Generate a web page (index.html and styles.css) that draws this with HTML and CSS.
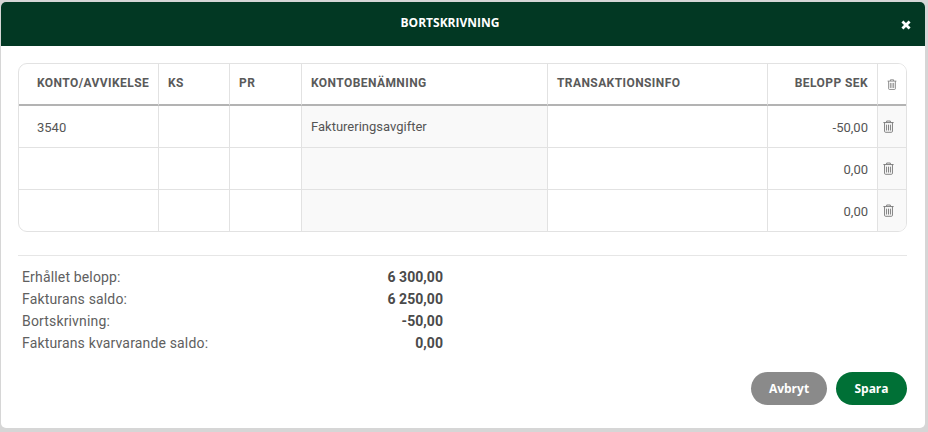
FILE: index.html
```html
<!DOCTYPE html>
<html lang="sv">
<head>
<meta charset="utf-8">
<title>Bortskrivning</title>
<link rel="stylesheet" href="styles.css">
</head>
<body>
<svg class="sprite" width="0" height="0" aria-hidden="true">
  <symbol id="trash" viewBox="0 0 12 14">
    <path d="M4 2.5V1h4v1.5M.4 2.7h11.2M1.7 2.7v9.6c0 .6.4 1 1 1h6.6c.6 0 1-.4 1-1V2.7M3.9 5v6.4M6 5v6.4M8.1 5v6.4" fill="none" stroke="currentColor" stroke-width="1"/>
  </symbol>
</svg>
<main class="modal">
  <header class="modal-head">
    <h1 class="modal-title">BORTSKRIVNING</h1>
    <button class="close" type="button" aria-label="Stäng">
      <svg width="10" height="10" viewBox="0 0 10 10"><path d="M2.4 2.4l5.2 5.2M7.6 2.4L2.4 7.6" stroke="#fff" stroke-width="2.8" stroke-linecap="square" fill="none"/></svg>
    </button>
  </header>
  <section class="modal-body">
    <div class="table-wrap">
      <table class="grid">
        <colgroup>
          <col class="c-konto"><col class="c-ks"><col class="c-pr"><col class="c-namn"><col class="c-info"><col class="c-belopp"><col class="c-del">
        </colgroup>
        <thead>
          <tr>
            <th class="first">KONTO/AVVIKELSE</th>
            <th>KS</th>
            <th>PR</th>
            <th>KONTOBENÄMNING</th>
            <th>TRANSAKTIONSINFO</th>
            <th class="num">BELOPP SEK</th>
            <th class="del head-del"><svg class="trash-small"><use href="#trash"/></svg></th>
          </tr>
        </thead>
        <tbody>
          <tr>
            <td class="first">3540</td><td></td><td></td>
            <td class="ro"><span class="ro-text">Faktureringsavgifter</span></td><td></td>
            <td class="num">-50,00</td>
            <td class="del"><svg class="trash"><use href="#trash"/></svg></td>
          </tr>
          <tr>
            <td class="first"></td><td></td><td></td><td class="ro"></td><td></td>
            <td class="num">0,00</td>
            <td class="del"><svg class="trash"><use href="#trash"/></svg></td>
          </tr>
          <tr>
            <td class="first"></td><td></td><td></td><td class="ro"></td><td></td>
            <td class="num">0,00</td>
            <td class="del"><svg class="trash"><use href="#trash"/></svg></td>
          </tr>
        </tbody>
      </table>
    </div>
    <hr class="rule">
    <dl class="summary">
      <div class="sum-row"><dt>Erhållet belopp:</dt><dd>6 300,00</dd></div>
      <div class="sum-row"><dt>Fakturans saldo:</dt><dd>6 250,00</dd></div>
      <div class="sum-row"><dt>Bortskrivning:</dt><dd>-50,00</dd></div>
      <div class="sum-row"><dt>Fakturans kvarvarande saldo:</dt><dd>0,00</dd></div>
    </dl>
    <div class="actions">
      <button class="btn btn-cancel" type="button">Avbryt</button>
      <button class="btn btn-save" type="button">Spara</button>
    </div>
  </section>
</main>
</body>
</html>
```
FILE: styles.css
```css
* { box-sizing: border-box; }
html, body { margin: 0; height: 100%; }
body {
  background: #d6d6d6;
  font-family: Roboto, "Liberation Sans", sans-serif;
  color: #4a4a4a;
  overflow: hidden;
  padding: 2px 3px 4px 1px;
}
.sprite { position: absolute; }
.modal {
  height: 426px;
  background: #fff;
  border-radius: 5px;
  overflow: hidden;
  display: flex;
  flex-direction: column;
}
.modal-head {
  height: 44px;
  flex: none;
  background: #023823;
  display: flex;
  align-items: flex-start;
  justify-content: center;
  padding-right: 26px;
  position: relative;
}
.modal-title {
  margin: 13px 0 0;
  font-family: "Open Sans", sans-serif;
  font-size: 12px;
  line-height: 15px;
  font-weight: 700;
  color: #fff;
}
.close {
  position: absolute;
  right: 14px;
  top: 18px;
  width: 10px;
  height: 10px;
  padding: 0;
  border: 0;
  background: none;
  display: flex;
}
.modal-body {
  flex: 1;
  padding: 17px 18px 0 17px;
  display: flex;
  flex-direction: column;
}
.table-wrap {
  width: 889px;
  height: 169px;
  border: 1px solid #e2e2e2;
  border-radius: 9px;
  overflow: hidden;
}
.grid {
  width: 887px;
  border-collapse: separate;
  border-spacing: 0;
  table-layout: fixed;
  font-size: 12px;
}
.c-konto { width: 140px; }
.c-ks { width: 71px; }
.c-pr { width: 72px; }
.c-namn { width: 246px; }
.c-info { width: 220px; }
.c-belopp { width: 110px; }
.c-del { width: 28px; }
th, td {
  padding: 0 9px;
  border-right: 1px solid #e2e2e2;
  text-align: left;
}
th:last-child, td:last-child { border-right: 0; }
th {
  height: 42px;
  padding-bottom: 2px;
  border-bottom: 2px solid #b3b3b3;
  font-weight: 700;
  letter-spacing: .42px;
  color: #5a5a5a;
}
td {
  height: 42px;
  padding-top: 2px;
  border-bottom: 1px solid #e2e2e2;
  color: #555;
  font-size: 13px;
}
tbody tr:last-child td { height: 41px; border-bottom: 0; }
.first { padding-left: 18px; }
.num { text-align: right; }
.ro { background: #f9f9f9; }
.ro-text { display: block; position: relative; top: -1px; }
td.del { padding: 0; background: #f9f9f9; text-align: left; }
th.del { padding: 0; background: #fff; }
.trash { display: block; width: 11px; height: 13px; margin: -1px 0 0 5px; color: #777; }
.trash-small { display: block; width: 10px; height: 11px; margin: 0 0 0 9px; color: #777; }
.rule {
  width: 889px;
  margin: 23px 0 0;
  border: 0;
  border-top: 1px solid #e6e6e6;
}
.summary {
  width: 421px;
  margin: 10px 0 0 4px;
  font-size: 14px;
  line-height: 22px;
}
.sum-row { display: flex; justify-content: space-between; height: 22px; }
.summary dt { color: #606060; letter-spacing: .16px; }
.summary dd { margin: 0; font-weight: 700; color: #4a4a4a; letter-spacing: .05px; }
.actions {
  margin-top: 18px;
  display: flex;
  justify-content: flex-end;
  gap: 9px;
}
.btn {
  height: 33px;
  border: 0;
  border-radius: 17px;
  color: #fff;
  font-family: "Open Sans", sans-serif;
  font-size: 12px;
  font-weight: 700;
  padding: 0;
}
.btn-cancel { width: 76px; background: #8a8a8a; }
.btn-save { width: 71px; background: #007036; }
```
